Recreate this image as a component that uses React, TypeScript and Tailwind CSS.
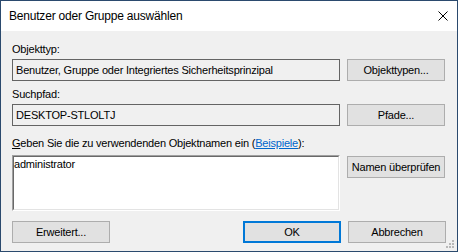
import React from 'react';

const Btn: React.FC<{ label: string; primary?: boolean; className?: string }> = ({ label, primary, className = '' }) => (
  <div
    className={`flex w-[98px] h-[22px] items-center justify-center bg-[#e1e1e1] ${
      primary ? 'border-2 border-[#0078d7]' : 'border border-[#adadad]'
    } ${className}`}
  >
    {label}
  </div>
);

const ReadBox: React.FC<{ text: string }> = ({ text }) => (
  <div className="flex h-[22px] w-[328px] items-center border border-[#646464] bg-[#f0f0f0] pl-[3px]">{text}</div>
);

export default function App() {
  return (
    <div className="relative flex h-[252px] w-[458px] flex-col border border-[#2b4a6e] bg-[#f0f0f0] font-['Liberation_Sans',Arial,sans-serif] text-[11px] leading-[13px] tracking-[-0.2px] text-black">
      {/* title bar */}
      <div className="flex h-[30px] items-center justify-between bg-white pl-[8px] pr-[9px]">
        <span className="text-[12px] leading-[16px]">Benutzer oder Gruppe auswählen</span>
        <svg width="10" height="10" viewBox="0 0 10 10" className="shrink-0">
          <path d="M0.5 0.5 L9.5 9.5 M9.5 0.5 L0.5 9.5" stroke="#000" strokeWidth="1" fill="none" />
        </svg>
      </div>

      <div className="flex flex-1 flex-col px-[11px] pt-[12px]">
        <div className="h-[13px]">Objekttyp:</div>
        <div className="mt-[3px] flex gap-[7px]">
          <ReadBox text="Benutzer, Gruppe oder Integriertes Sicherheitsprinzipal" />
          <Btn label="Objekttypen..." />
        </div>

        <div className="mt-[7px] h-[13px]">Suchpfad:</div>
        <div className="mt-[3px] flex gap-[7px]">
          <ReadBox text="DESKTOP-STLOLTJ" />
          <Btn label="Pfade..." />
        </div>

        <div className="mt-[11px] h-[13px]">
          <span className="underline">G</span>eben Sie die zu verwendenden Objektnamen ein (
          <span className="text-[#0066cc] underline">Beispiele</span>):
        </div>
        <div className="mt-[5px] flex items-start gap-[7px]">
          <div className="h-[56px] w-[328px] border border-b-white border-l-[#a0a0a0] border-r-white border-t-[#a0a0a0]">
            <div className="h-full w-full border border-b-[#e3e3e3] border-l-[#696969] border-r-[#e3e3e3] border-t-[#696969] bg-white pt-[1px]">
              administrator
            </div>
          </div>
          <Btn label="Namen überprüfen" className="mt-[1px]" />
        </div>

        <div className="mt-[10px] flex justify-between">
          <Btn label="Erweitert..." />
          <div className="flex gap-[7px]">
            <Btn label="OK" primary />
            <Btn label="Abbrechen" />
          </div>
        </div>
      </div>

      {/* size grip */}
      <svg width="9" height="9" viewBox="0 0 9 9" className="absolute bottom-[2px] right-[2px]">
        <g fill="#b8b8b8">
          <rect x="6" y="0" width="2" height="2" />
          <rect x="3" y="3" width="2" height="2" />
          <rect x="6" y="3" width="2" height="2" />
          <rect x="0" y="6" width="2" height="2" />
          <rect x="3" y="6" width="2" height="2" />
          <rect x="6" y="6" width="2" height="2" />
        </g>
      </svg>
    </div>
  );
}
